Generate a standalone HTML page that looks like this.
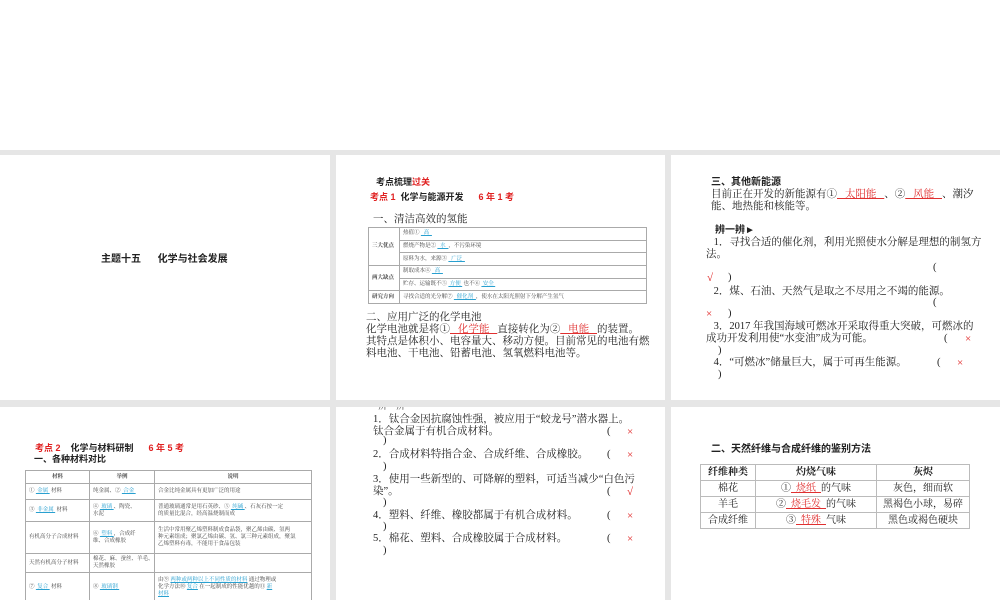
<!DOCTYPE html>
<html><head><meta charset="utf-8"><style>
*{margin:0;padding:0;box-sizing:border-box}
body{width:1000px;height:600px;background:#fff;position:relative;overflow:hidden;font-family:"Liberation Serif","Noto Serif CJK SC",serif;color:#222}
.bg{position:absolute;left:0;top:150px;width:1000px;height:450px;background:#e6e6e6}
.s{position:absolute;background:#fff;overflow:hidden}
.a{position:absolute;white-space:nowrap}
.r{color:#e02020}
.u{text-decoration:underline;color:#e03030}
.b{font-weight:bold;font-family:"Liberation Sans","Noto Sans CJK SC",sans-serif}
.l{position:absolute;white-space:nowrap;font-size:10.5px;line-height:12px;height:12px}
.m{position:absolute;font-size:11px;line-height:12px;color:#e02020}
table{border-collapse:collapse;table-layout:fixed}
.tb td{border:1px solid #aaa;font-size:5.5px;line-height:7px;padding:0 3px;color:#444;overflow:hidden;white-space:nowrap}
.bl{color:#29a0d0;text-decoration:underline}
.tf td{border:1px solid #bbb;font-size:10px;text-align:center;height:16px;line-height:14px;padding:0}
</style></head><body>
<div class="bg"></div>
<!-- slide 1 -->
<div class="s" style="left:0;top:155px;width:330px;height:245px">
<div class="a b" style="left:101px;top:95px;font-size:10px">主题十五&nbsp;&nbsp;&nbsp;&nbsp;&nbsp;&nbsp;化学与社会发展</div>
</div>
<!-- slide 2 -->
<div class="s" style="left:336px;top:155px;width:329px;height:245px">
<div class="a b" style="left:40px;top:20px;font-size:9px">考点梳理<span class="r">过关</span></div>
<div class="a b" style="left:34px;top:35px;font-size:9px"><span class="r">考点 1</span>&nbsp; 化学与能源开发&nbsp;&nbsp;&nbsp;&nbsp;&nbsp; <span class="r">6 年 1 考</span></div>
<div class="l" style="left:37px;top:59px">一、清洁高效的氢能</div>
<table class="tb a" style="left:32px;top:72px;width:279px">
<col style="width:31px"><col>
<tr style="height:12.7px"><td rowspan="3" style="font-weight:bold">三大优点</td><td>热值① <span class="bl">&nbsp;&nbsp;高&nbsp;&nbsp;</span></td></tr>
<tr style="height:12.7px"><td>燃烧产物是② <span class="bl">&nbsp;&nbsp;水&nbsp;&nbsp;</span>，不污染环境</td></tr>
<tr style="height:12.7px"><td>原料为水，来源③ <span class="bl">&nbsp;&nbsp;广泛&nbsp;&nbsp;</span></td></tr>
<tr style="height:12.7px"><td rowspan="2" style="font-weight:bold">两大缺点</td><td>制取成本④ <span class="bl">&nbsp;&nbsp;高&nbsp;&nbsp;</span></td></tr>
<tr style="height:12.7px"><td>贮存、运输既不⑤ <span class="bl">&nbsp;方便&nbsp;</span> 也不⑥ <span class="bl">&nbsp;安全&nbsp;</span></td></tr>
<tr style="height:12.7px"><td style="font-weight:bold">研究方向</td><td>寻找合适的光分解⑦ <span class="bl">&nbsp;&nbsp;催化剂&nbsp;&nbsp;</span>，使水在太阳光照射下分解产生氢气</td></tr>
</table>
<div class="l" style="left:30px;top:157px">二、应用广泛的化学电池</div>
<div class="l" style="left:30px;top:169px">化学电池就是将①<span class="u">&nbsp;&nbsp;&nbsp;化学能&nbsp;&nbsp;&nbsp;</span>直接转化为②<span class="u">&nbsp;&nbsp;&nbsp;电能&nbsp;&nbsp;&nbsp;</span>的装置。</div>
<div class="l" style="left:30px;top:181px">其特点是体积小、电容量大、移动方便。目前常见的电池有燃</div>
<div class="l" style="left:30px;top:193px">料电池、干电池、铅蓄电池、氢氧燃料电池等。</div>
</div>
<!-- slide 3 -->
<div class="s" style="left:671px;top:155px;width:329px;height:245px">
<div class="l b" style="left:40px;top:22px;font-size:10px">三、其他新能源</div>
<div class="l" style="left:40px;top:34px">目前正在开发的新能源有①<span class="u">&nbsp;&nbsp;&nbsp;太阳能&nbsp;&nbsp;&nbsp;</span>、②<span class="u">&nbsp;&nbsp;&nbsp;风能&nbsp;&nbsp;&nbsp;</span>、潮汐</div>
<div class="l" style="left:40px;top:46px">能、地热能和核能等。</div>
<div class="l b" style="left:44px;top:70px;font-size:10px">辨一辨►</div>
<div class="l" style="left:40px;top:82px">&nbsp;1．寻找合适的催化剂，利用光照使水分解是理想的制氢方</div>
<div class="l" style="left:35px;top:94px">法。</div>
<div class="l" style="left:262px;top:107px">(</div>
<div class="m" style="left:36px;top:117px">√</div><div class="l" style="left:57px;top:117px">)</div>
<div class="l" style="left:40px;top:131px">&nbsp;2．煤、石油、天然气是取之不尽用之不竭的能源。</div>
<div class="l" style="left:262px;top:142px">(</div>
<div class="m" style="left:35px;top:153px">×</div><div class="l" style="left:57px;top:153px">)</div>
<div class="l" style="left:40px;top:166px">&nbsp;3．2017 年我国海域可燃冰开采取得重大突破，可燃冰的</div>
<div class="l" style="left:35px;top:178px">成功开发利用使“水变油”成为可能。</div>
<div class="l" style="left:273px;top:178px">(</div><div class="m" style="left:294px;top:178px">×</div>
<div class="l" style="left:47px;top:190px">)</div>
<div class="l" style="left:40px;top:202px">&nbsp;4．“可燃冰”储量巨大，属于可再生能源。</div>
<div class="l" style="left:266px;top:202px">(</div><div class="m" style="left:286px;top:202px">×</div>
<div class="l" style="left:47px;top:214px">)</div>
</div>
<!-- slide 4 -->
<div class="s" style="left:0;top:407px;width:330px;height:193px">
<div class="a b" style="left:35px;top:34px;font-size:9px"><span class="r">考点 2</span>&nbsp;&nbsp;&nbsp; 化学与材料研制&nbsp;&nbsp;&nbsp;&nbsp;&nbsp; <span class="r">6 年 5 考</span></div>
<div class="a b" style="left:34px;top:45px;font-size:9px">一、各种材料对比</div>
<table class="tb a" style="left:25px;top:63px;width:287px">
<col style="width:64px"><col style="width:65px"><col>
<tr style="text-align:center;font-weight:bold;height:13px"><td>材料</td><td>举例</td><td>说明</td></tr>
<tr style="height:16px"><td>① <span class="bl">&nbsp;金属&nbsp;</span> 材料</td><td>纯金属、② <span class="bl">&nbsp;合金&nbsp;</span></td><td>合金比纯金属具有更加广泛的用途</td></tr>
<tr style="height:22px"><td>③ <span class="bl">&nbsp;非金属&nbsp;</span> 材料</td><td>④ <span class="bl">&nbsp;玻璃&nbsp;</span>、陶瓷、<br>水泥</td><td>普通玻璃通常是用石英砂、⑤ <span class="bl">&nbsp;纯碱&nbsp;</span>、石灰石按一定<br>的质量比混合，经高温烧制而成</td></tr>
<tr style="height:32px"><td>有机高分子合成材料</td><td>⑥ <span class="bl">&nbsp;塑料&nbsp;</span>，合成纤<br>维、合成橡胶</td><td>生活中常用聚乙烯塑料制成食品袋，聚乙烯由碳、氢两<br>种元素组成；聚氯乙烯由碳、氢、氯三种元素组成，聚氯<br>乙烯塑料有毒，不能用于食品包装</td></tr>
<tr style="height:19px"><td>天然有机高分子材料</td><td>棉花、麻、蚕丝、羊毛、<br>天然橡胶</td><td></td></tr>
<tr style="height:30px"><td>⑦ <span class="bl">&nbsp;复合&nbsp;</span> 材料</td><td>⑧ <span class="bl">&nbsp;玻璃钢&nbsp;</span></td><td>由⑨ <span class="bl">两种或两种以上不同性质的材料</span> 通过物理或<br>化学方法⑩ <span class="bl">复合</span> 在一起制成的性能优越的⑪ <span class="bl">新</span><br><span class="bl">材料</span></td></tr>
</table>
</div>
<!-- slide 5 -->
<div class="s" style="left:336px;top:407px;width:329px;height:193px">
<div class="l" style="left:42px;top:-7px;font-size:9px">辨一辨</div>
<div class="l" style="left:37px;top:7px">1．钛合金因抗腐蚀性强，被应用于“蛟龙号”潜水器上。</div>
<div class="l" style="left:37px;top:19px">钛合金属于有机合成材料。</div>
<div class="l" style="left:271px;top:19px">(</div><div class="m" style="left:291px;top:19px">×</div>
<div class="l" style="left:47px;top:28px">)</div>
<div class="l" style="left:37px;top:42px">2．合成材料特指合金、合成纤维、合成橡胶。</div>
<div class="l" style="left:271px;top:42px">(</div><div class="m" style="left:291px;top:42px">×</div>
<div class="l" style="left:47px;top:54px">)</div>
<div class="l" style="left:37px;top:67px">3．使用一些新型的、可降解的塑料，可适当减少“白色污</div>
<div class="l" style="left:37px;top:79px">染”。</div>
<div class="l" style="left:271px;top:79px">(</div><div class="m" style="left:291px;top:79px">√</div>
<div class="l" style="left:47px;top:90px">)</div>
<div class="l" style="left:37px;top:103px">4．塑料、纤维、橡胶都属于有机合成材料。</div>
<div class="l" style="left:271px;top:103px">(</div><div class="m" style="left:291px;top:103px">×</div>
<div class="l" style="left:47px;top:114px">)</div>
<div class="l" style="left:37px;top:126px">5．棉花、塑料、合成橡胶属于合成材料。</div>
<div class="l" style="left:271px;top:126px">(</div><div class="m" style="left:291px;top:126px">×</div>
<div class="l" style="left:47px;top:138px">)</div>
</div>
<!-- slide 6 -->
<div class="s" style="left:671px;top:407px;width:329px;height:193px">
<div class="a b" style="left:40px;top:33px;font-size:10px">二、天然纤维与合成纤维的鉴别方法</div>
<table class="tf a" style="left:29px;top:57px;width:270px">
<col style="width:55px"><col><col style="width:93px">
<tr style="font-weight:bold"><td>纤维种类</td><td>灼烧气味</td><td>灰烬</td></tr>
<tr><td>棉花</td><td>①<span class="u">&nbsp;&nbsp;烧纸&nbsp;&nbsp;</span>的气味</td><td>灰色，细而软</td></tr>
<tr><td>羊毛</td><td>②<span class="u">&nbsp;&nbsp;烧毛发&nbsp;&nbsp;</span>的气味</td><td>黑褐色小球，易碎</td></tr>
<tr><td>合成纤维</td><td>③<span class="u">&nbsp;&nbsp;特殊&nbsp;&nbsp;</span>气味</td><td>黑色或褐色硬块</td></tr>
</table>
</div>
</body></html>
